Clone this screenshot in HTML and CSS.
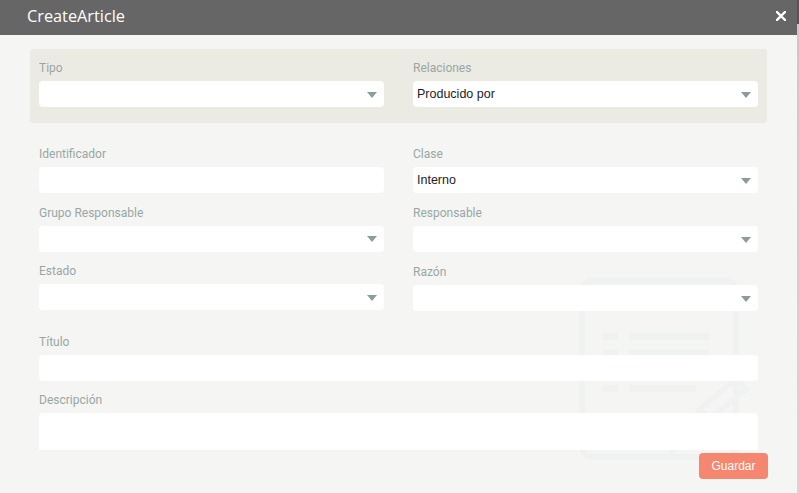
FILE: index.html
```html
<!DOCTYPE html>
<html lang="es">
<head>
<meta charset="utf-8">
<title>CreateArticle</title>
<link rel="stylesheet" href="styles.css">
</head>
<body>
<div class="page">
  <div class="modal">
    <header class="modal-header">
      <h1 class="modal-title">CreateArticle</h1>
      <button class="close-btn" aria-label="Cerrar">
        <svg width="10" height="10" viewBox="0 0 10 10"><path d="M1 1 L9 9 M9 1 L1 9" stroke="#fff" stroke-width="2.4" stroke-linecap="square"/></svg>
      </button>
    </header>
    <div class="modal-body">
      <svg class="watermark" width="180" height="190" viewBox="0 0 180 190">
        <rect x="4" y="4" width="154" height="176" rx="10" fill="none" stroke="#f0f2f1" stroke-width="6"/>
        <rect x="25" y="56" width="15" height="7" fill="#f0f2f1"/>
        <rect x="51" y="56" width="80" height="7" fill="#f0f2f1"/>
        <rect x="25" y="73" width="15" height="7" fill="#f0f2f1"/>
        <rect x="51" y="73" width="80" height="7" fill="#f0f2f1"/>
        <rect x="25" y="108" width="15" height="7" fill="#f0f2f1"/>
        <rect x="51" y="108" width="67" height="7" fill="#f0f2f1"/>
        <path d="M122 132 L158 102 L168 112 L132 142 Z" fill="none" stroke="#f0f2f1" stroke-width="5"/>
        <path d="M122 132 L92 176" fill="none" stroke="#f0f2f1" stroke-width="5"/>
      </svg>
      <div class="scroll">
        <section class="panel cols">
          <div class="field">
            <label class="label">Tipo</label>
            <div class="control select"><span class="value"></span><span class="caret"></span></div>
          </div>
          <div class="field">
            <label class="label">Relaciones</label>
            <div class="control select"><span class="value">Producido por</span><span class="caret"></span></div>
          </div>
        </section>
        <div class="cols fields">
          <div class="col">
            <div class="field">
              <label class="label">Identificador</label>
              <div class="control"></div>
            </div>
            <div class="field">
              <label class="label">Grupo Responsable</label>
              <div class="control select"><span class="value"></span><span class="caret"></span></div>
            </div>
            <div class="field">
              <label class="label">Estado</label>
              <div class="control select"><span class="value"></span><span class="caret"></span></div>
            </div>
          </div>
          <div class="col col-right">
            <div class="field">
              <label class="label">Clase</label>
              <div class="control select"><span class="value">Interno</span><span class="caret"></span></div>
            </div>
            <div class="field">
              <label class="label">Responsable</label>
              <div class="control select"><span class="value"></span><span class="caret"></span></div>
            </div>
            <div class="field">
              <label class="label">Razón</label>
              <div class="control select"><span class="value"></span><span class="caret"></span></div>
            </div>
          </div>
        </div>
        <div class="col full">
          <div class="field">
            <label class="label">Título</label>
            <div class="control"></div>
          </div>
          <div class="field">
            <label class="label">Descripción</label>
            <div class="control textarea"></div>
          </div>
        </div>
      </div>
      <div class="footer">
        <button class="save-btn">Guardar</button>
      </div>
    </div>
  </div>
  <div class="backdrop-edge"></div>
</div>
</body>
</html>
```

FILE: styles.css
```css
* { box-sizing: border-box; }
html, body { margin: 0; padding: 0; }
body {
  width: 799px;
  height: 493px;
  overflow: hidden;
  font-family: Roboto, "Liberation Sans", sans-serif;
}
.page {
  display: flex;
  height: 493px;
}
.modal {
  width: 797px;
  height: 493px;
  display: flex;
  flex-direction: column;
  background: #f5f5f3;
}
.backdrop-edge {
  width: 2px;
  height: 493px;
  background: linear-gradient(to bottom, #555555 0, #555555 24px, #c9c9c9 24px, #d6d6d6 100%);
}
.modal-header {
  height: 35px;
  background: #666666;
  display: flex;
  align-items: center;
  justify-content: space-between;
  padding: 0 11px 0 27px;
  flex: none;
}
.modal-title {
  margin: 0;
  font-family: "Open Sans", sans-serif;
  font-weight: 400;
  font-size: 16.3px;
  color: #ffffff;
  line-height: 20px;
  padding-bottom: 3px;
}
.close-btn {
  background: none;
  border: 0;
  padding: 0;
  width: 10px;
  height: 10px;
  display: flex;
  margin-top: -3px;
}
.modal-body {
  position: relative;
  flex: 1;
  display: flex;
  flex-direction: column;
}
.watermark {
  position: absolute;
  left: 578px;
  top: 242px;
  z-index: 0;
}
.scroll {
  position: relative;
  z-index: 1;
  height: 415px;
  overflow: hidden;
  padding: 14px 30px 0 30px;
  flex: none;
}
.panel {
  background: #ebeae3;
  border-radius: 3px;
  padding: 12px 9px 16px;
}
.cols {
  display: grid;
  grid-template-columns: 345px 345px;
  column-gap: 29px;
}
.fields {
  margin-top: 24px;
  padding: 0 9px;
}
.col {
  display: flex;
  flex-direction: column;
  gap: 12.5px;
}
.col-right { gap: 13px; }
.full {
  margin-top: 24px;
  padding: 0 9px;
  gap: 12px;
}
.field {
  display: flex;
  flex-direction: column;
}
.label {
  font-family: Roboto, sans-serif;
  font-size: 12px;
  line-height: 14px;
  color: #98a7a6;
  margin-bottom: 6px;
}
.control {
  height: 26px;
  background: #ffffff;
  border-radius: 4px;
  display: flex;
  align-items: center;
  padding: 0 7px 0 4px;
}
.textarea { height: 60px; }
.value {
  flex: 1;
  font-family: "Liberation Sans", Arial, sans-serif;
  font-size: 12.5px;
  color: #1d1b2a;
}
.caret {
  width: 0;
  height: 0;
  border-left: 5px solid transparent;
  border-right: 5px solid transparent;
  border-top: 6px solid #8d9c9a;
  margin-top: 1px;
}
.footer {
  position: relative;
  z-index: 1;
  display: flex;
  justify-content: flex-end;
  padding: 3px 29px 0 0;
}
.save-btn {
  width: 69px;
  height: 26px;
  background: #f5866f;
  border: 0;
  border-radius: 4px;
  color: #ffffff;
  font-family: "Liberation Sans", Arial, sans-serif;
  font-size: 12px;
  padding: 0;
}
```
